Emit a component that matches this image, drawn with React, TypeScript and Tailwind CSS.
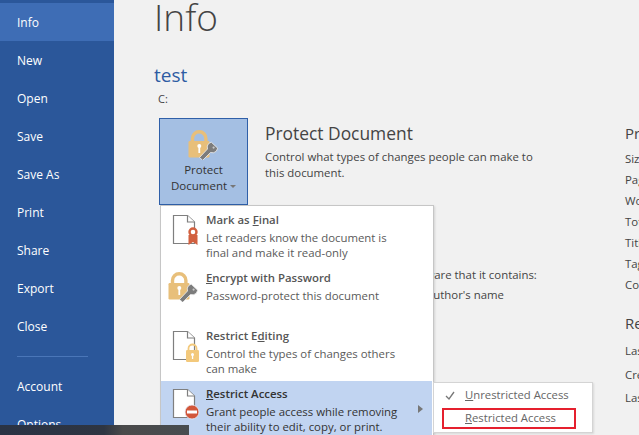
import React from "react";

const Doc = ({ children }: { children?: React.ReactNode }) => (
  <svg width="30" height="33" viewBox="0 0 30 33" className="ml-[3px] block">
    <path d="M1.5 1.5H15.5L22.5 8V29.5H1.5Z" fill="#fff" stroke="#7f7f7f" strokeWidth="1.2" />
    <path d="M15.5 1.5V8H22.5" fill="#fff" stroke="#7f7f7f" strokeWidth="1.2" />
    {children}
  </svg>
);

const BigLock = () => (
  <svg width="31" height="30" viewBox="0 0 31 30" className="block">
    <path d="M4.5 12V8.5a6.7 6.7 0 0 1 13.4 0V12" fill="none" stroke="#e8bf7a" strokeWidth="3.4" />
    <rect x="0.5" y="11" width="21" height="16.5" rx="1.2" fill="#e8bf7a" />
    <circle cx="11.3" cy="16" r="2" fill="#fff" />
    <rect x="10.4" y="16.5" width="1.8" height="6.5" fill="#fff" />
    <path d="M11.5 27.5l8-8.5a5.6 5.6 0 0 1 1.2-5.5l2.6-1.3 6.4 6-1.4 3a5.6 5.6 0 0 1-5.8 1.3l-7.8 7.8z" fill="#7c7c7c" stroke="#f0f0f0" strokeWidth="0.8" />
    <circle cx="25.6" cy="17.6" r="1.1" fill="#c9c9c9" />
  </svg>
);

const Item = ({ icon, title, lines, active, arrow }: { icon: React.ReactNode; title: React.ReactNode; lines: string[]; active?: boolean; arrow?: boolean }) => (
  <div className={`flex h-[58px] ${active ? "-ml-px w-[271px] bg-[#c1d4f1] pl-[8px]" : "pl-[7px]"}`}>
    <div className="w-[37px] shrink-0 pt-[7px]">{icon}</div>
    <div className={`flex-1 text-[11.4px] leading-[15px] ${active ? "text-[#333]" : "text-[#5a5a5a]"}`}>
      <div className={`mb-[3px] mt-[5px] font-semibold ${active ? "text-[#333]" : "text-[#555]"}`}>{title}</div>
      {lines.map((l) => <div key={l} className="h-[15px] whitespace-nowrap">{l}</div>)}
    </div>
    {arrow && <div className="mr-[9px] mt-[24px] h-0 w-0 border-y-[4px] border-l-[5px] border-y-transparent border-l-[#777]" />}
  </div>
);

const nav = ["Info", "New", "Open", "Save", "Save As", "Print", "Share", "Export", "Close"];
const props = ["Size", "Pages", "Words", "Total Editing Time", "Title", "Tags", "Comments"];
const dates = ["Last Modified", "Created", "Last Printed"];

export default function App() {
  return (
    <div className="relative flex h-[435px] w-[639px] overflow-hidden bg-[#f1f1f1] text-[#444] [font-family:'Open_Sans','Noto_Sans',sans-serif]">
      <aside className="flex w-[114px] shrink-0 flex-col bg-[#2b579a] pt-[3px] text-[12px] text-white">
        {nav.map((n, i) => (
          <div key={n} className={`flex h-[38px] shrink-0 items-center pl-[17px] pt-[2px] ${i === 0 ? "bg-[#3e6db5]" : ""}`}>{n}</div>
        ))}
        <div className="ml-[17px] mt-[11px] h-px w-[71px] shrink-0 bg-[#4a76b8]" />
        <div className="mt-[11px] flex h-[38px] shrink-0 items-center pl-[17px]">Account</div>
        <div className="flex h-[38px] shrink-0 items-center pl-[17px]">Options</div>
      </aside>

      <main className="relative min-w-0 flex-1 pl-[40px]">
        <h1 className="-mt-[13px] h-[60px] text-[37px] font-light leading-[60px] text-[#444]">Info</h1>
        <div className="mt-[15px] h-[27px] text-[19px] leading-[27px] text-[#2e5ca3]">test</div>
        <div className="ml-[4px] mt-[1px] h-[18px] text-[11px] leading-[18px] text-[#444]">C:</div>

        <div className="ml-[5px] mt-[10px] flex">
          <div className="flex h-[87px] w-[89px] shrink-0 flex-col items-center border border-[#2f5fa8] bg-[#a4bfe3] pt-[11px] text-[11.5px] leading-[16px] text-[#333]">
            <BigLock />
            <div className="mt-[2px] text-center">Protect<br />Document<span className="ml-[3px] inline-block h-0 w-0 translate-y-[-2px] border-x-[3px] border-t-[3px] border-x-transparent border-t-[#777]" /></div>
          </div>
          <div className="ml-[17px] w-[360px] shrink-0 text-[11.4px]">
            <h2 className="mt-[2px] h-[26px] text-[17.4px] leading-[26px] text-[#444]">Protect Document</h2>
            <p className="mt-[3px] w-[275px] leading-[16px] text-[#444]">Control what types of changes people can make to this document.</p>
            <div className="-ml-[3px] mt-[84px] whitespace-nowrap leading-[19.5px]">
              <div>Before publishing this file, be aware that it contains:</div>
              <div className="pl-[25px]">Document properties and author's name</div>
            </div>
          </div>
          <div className="shrink-0 whitespace-nowrap text-[11.4px]">
            <div className="mt-[2px] h-[28px] text-[15px] leading-[26px]">Properties</div>
            {props.map((p) => <div key={p} className="h-[21px] leading-[21px]">{p}</div>)}
            <div className="mt-[15px] h-[29px] text-[15px] leading-[26px]">Related Dates</div>
            {dates.map((p) => <div key={p} className="h-[23.5px] leading-[23.5px]">{p}</div>)}
          </div>
        </div>
      </main>

      <div className="absolute left-[160px] top-[205px] h-[240px] w-[274px] border border-[#c6c6c6] bg-white pl-px pt-[1px] shadow-[1px_1px_2px_rgba(0,0,0,0.12)]">
        <Item
          icon={<Doc><path d="M16.5 21V31L21 28L25.5 31V21Z" fill="#d2603f" /><circle cx="21" cy="18" r="3.5" fill="#fff" stroke="#d2603f" strokeWidth="2.4" /></Doc>}
          title={<>Mark as <u>F</u>inal</>}
          lines={["Let readers know the document is", "final and make it read-only"]}
        />
        <Item icon={<div className="-ml-[1px]"><BigLock /></div>} title={<><u>E</u>ncrypt with Password</>} lines={["Password-protect this document"]} />
        <Item
          icon={<Doc><path d="M16.5 21v-2.5a4 4 0 0 1 8 0V21" fill="none" stroke="#f3c97c" strokeWidth="1.8" /><rect x="14" y="20" width="13" height="12" rx="1.2" fill="#f3c97c" /><circle cx="20.5" cy="24.5" r="1.5" fill="#fff" /><rect x="19.9" y="25" width="1.3" height="4" fill="#fff" /></Doc>}
          title={<>Restrict E<u>d</u>iting</>}
          lines={["Control the types of changes others", "can make"]}
        />
        <Item
          active
          arrow
          icon={<Doc><circle cx="20" cy="24" r="7" fill="#d2563a" stroke="#e8eef8" strokeWidth="0.8" /><rect x="15" y="22.5" width="10" height="3" fill="#fff" /></Doc>}
          title={<><u>R</u>estrict Access</>}
          lines={["Grant people access while removing", "their ability to edit, copy, or print."]}
        />
      </div>

      <div className="absolute left-[433px] top-[382px] h-[51px] w-[160px] border border-[#d4d4d4] bg-white text-[11.3px] text-[#666] shadow-[1px_1px_2px_rgba(0,0,0,0.1)]">
        <div className="flex h-[25px] items-center">
          <svg width="12" height="12" viewBox="0 0 12 12" className="ml-[10px] mr-[9px]"><path d="M2 6l3 3 5-7" fill="none" stroke="#777" strokeWidth="1.3" /></svg>
          <span><u>U</u>nrestricted Access</span>
        </div>
        <div className="ml-[8px] flex h-[21px] w-[134px] items-center border-2 border-[#e5202e] pl-[21px]">
          <span><u>R</u>estricted Access</span>
        </div>
      </div>

      <div className="absolute bottom-0 left-0 h-[10px] w-[189px] bg-[linear-gradient(90deg,#2a3344_0%,#2e3542_55%,#4a4a4a_65%,#474c50_100%)]" />
    </div>
  );
}
